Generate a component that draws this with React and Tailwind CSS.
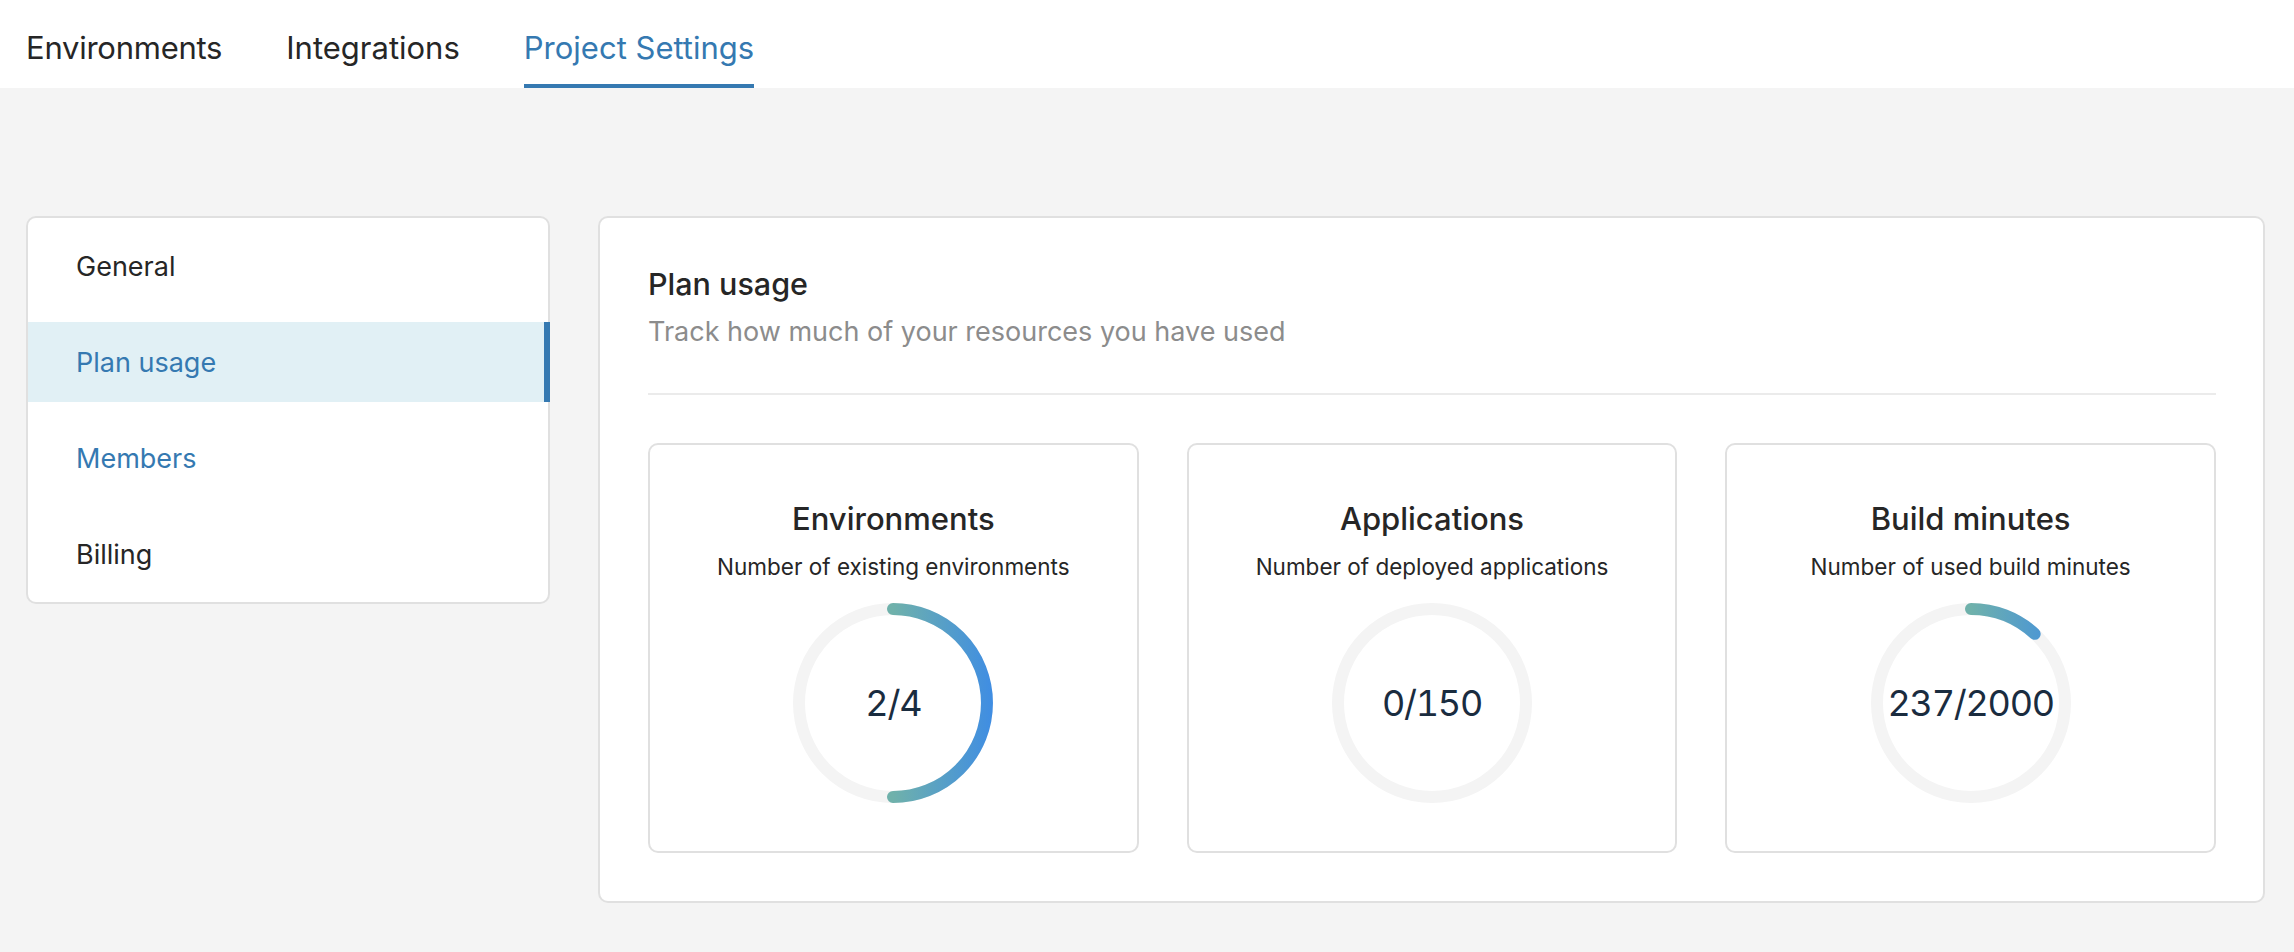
const usage = [
  { title: "Environments", text: "Number of existing environments", used: 2, total: 4 },
  { title: "Applications", text: "Number of deployed applications", used: 0, total: 150 },
  { title: "Build minutes", text: "Number of used build minutes", used: 237, total: 2000 },
];

const Ring = ({ id, used, total }) => {
  const radius = 94;
  const angle = (2 * Math.PI * used) / total;

  return (
    <div className="relative w-[200px] h-[200px] mt-[18px]">
      <svg width="200" height="200" viewBox="0 0 200 200" className="block">
        <defs>
          <linearGradient id={id} gradientUnits="userSpaceOnUse" x1="100" y1="0" x2="200" y2="0">
            <stop offset="0" stopColor="#6fb1ab" />
            <stop offset="1" stopColor="#3f8de3" />
          </linearGradient>
        </defs>
        <circle cx="100" cy="100" r={radius} fill="none" stroke="#f4f4f4" strokeWidth="12" />
        {used > 0 && (
          <path
            d={`M 100 6 A 94 94 0 ${used / total > 0.5 ? 1 : 0} 1 ${100 + radius * Math.sin(angle)} ${100 - radius * Math.cos(angle)}`}
            fill="none"
            stroke={`url(#${id})`}
            strokeWidth="12"
            strokeLinecap="round"
          />
        )}
      </svg>
      <div className="absolute inset-0 flex items-center justify-center text-[36px] tracking-[-1.25px] tabular-nums text-[#1a2c3f]">
        {used}/{total}
      </div>
    </div>
  );
};

const App = () => {
  return (
    <div className="min-h-screen bg-[#f4f4f4] font-['Inter',sans-serif] text-[#262626]">
      {/* Tabs */}
      <div className="flex gap-[64px] h-[88px] pl-[26px] bg-white">
        <div className="h-[88px] pt-[28px] text-[31px] tracking-[-0.25px] leading-[40px]">Environments</div>
        <div className="h-[88px] pt-[28px] text-[31px] leading-[40px]">Integrations</div>
        <div className="h-[88px] pt-[28px] text-[31px] leading-[40px] text-[#3579b1] border-b-4 border-[#3579b1]">
          Project Settings
        </div>
      </div>

      <div className="flex items-start gap-[48px] pt-[128px] pl-[26px] pr-[29px] pb-[50px]">
        {/* Side menu */}
        <div className="flex flex-col gap-[16px] w-[524px] py-[8px] bg-white border-2 border-[#e0e0e0] rounded-[10px]">
          <div className="flex items-center h-[80px] pl-[48px] pt-[2px] text-[27px]">General</div>
          <div className="flex items-center h-[80px] pl-[48px] pt-[2px] -mr-[2px] text-[27px] text-[#3579b1] bg-[#e1f0f5] border-r-[6px] border-[#3579b1]">
            Plan usage
          </div>
          <div className="flex items-center h-[80px] pl-[48px] pt-[2px] text-[27px] text-[#3579b1]">Members</div>
          <div className="flex items-center h-[80px] pl-[48px] pt-[2px] text-[27px]">Billing</div>
        </div>

        {/* Plan usage */}
        <div className="flex-1 pt-[48px] pb-[48px] pl-[48px] pr-[47px] bg-white border-2 border-[#e0e0e0] rounded-[10px]">
          <h2 className="text-[30.5px] leading-[36px] font-medium">Plan usage</h2>
          <p className="mt-[12px] text-[27px] leading-[36px] text-[#8c8c8c]">Track how much of your resources you have used</p>
          <div className="mt-[43px] mb-[48px] h-[2px] bg-[#ebebeb]" />
          <div className="grid grid-cols-3 gap-[48px]">
            {usage.map((item, i) => (
              <div key={item.title} className="flex flex-col items-center pt-[48px] pb-[48px] border-2 border-[#e0e0e0] rounded-[10px]">
                <h3 className="text-[31px] leading-[52px] font-medium">{item.title}</h3>
                <p className="mt-[4px] text-[22.5px] leading-[36px]">{item.text}</p>
                <Ring id={`ring-${i}`} used={item.used} total={item.total} />
              </div>
            ))}
          </div>
        </div>
      </div>
    </div>
  );
};

export default App;
